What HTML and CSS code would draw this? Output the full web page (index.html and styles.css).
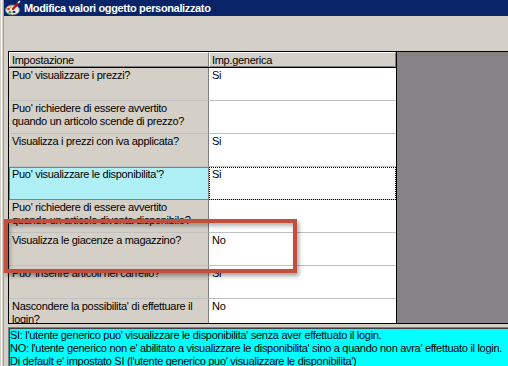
FILE: index.html
```html
<!DOCTYPE html>
<html lang="it">
<head>
    <meta charset="UTF-8">
    <title>Modifica valori oggetto personalizzato</title>
    <link rel="stylesheet" href="styles.css">
</head>
<body>
    <div class="window">
        <!-- Title bar -->
        <div class="titlebar">
            <svg class="app-icon" width="16" height="16" viewBox="0 0 16 16">
                <ellipse cx="7.5" cy="10" rx="7" ry="5" fill="#e8e8e8" stroke="#7a7a7a"/>
                <ellipse cx="9" cy="12" rx="1.6" ry="1.1" fill="#0a246a"/>
                <circle cx="3.5" cy="9" r="1.3" fill="#d22"/>
                <circle cx="5" cy="12.3" r="1.3" fill="#2a2"/>
                <circle cx="6" cy="7" r="1.2" fill="#e8c020"/>
                <path d="M8 9 L14 2" stroke="#c01010" stroke-width="2.2" stroke-linecap="round"/>
                <path d="M13 3 L15 1" stroke="#fff" stroke-width="1.6"/>
            </svg>
            <span class="title">Modifica valori oggetto personalizzato</span>
        </div>

        <div class="client">
            <div class="grid">
                <div class="sheet">
                    <div class="row head">
                        <div class="cell label">Impostazione</div>
                        <div class="cell value">Imp.generica</div>
                    </div>
                    <div class="row">
                        <div class="cell label">Puo' visualizzare i prezzi?</div>
                        <div class="cell value">Si</div>
                    </div>
                    <div class="row">
                        <div class="cell label">Puo' richiedere di essere avvertito<br>quando un articolo scende di prezzo?</div>
                        <div class="cell value"></div>
                    </div>
                    <div class="row">
                        <div class="cell label">Visualizza i prezzi con iva applicata?</div>
                        <div class="cell value">Si</div>
                    </div>
                    <div class="row selected">
                        <div class="cell label">Puo' visualizzare le disponibilita'?</div>
                        <div class="cell value">Si</div>
                    </div>
                    <div class="row">
                        <div class="cell label">Puo' richiedere di essere avvertito<br>quando un articolo diventa disponibile?</div>
                        <div class="cell value"></div>
                    </div>
                    <div class="row">
                        <div class="cell label">Visualizza le giacenze a magazzino?</div>
                        <div class="cell value">No</div>
                    </div>
                    <div class="row">
                        <div class="cell label">Puo' inserire articoli nel carrello?</div>
                        <div class="cell value">Si</div>
                    </div>
                    <div class="row">
                        <div class="cell label">Nascondere la possibilita' di effettuare il<br>login?</div>
                        <div class="cell value">No</div>
                    </div>
                </div>
                <div class="workspace"></div>
            </div>

            <div class="hint">
                <p>SI: l'utente generico puo' visualizzare le disponibilita' senza aver effettuato il login.</p>
                <p>NO: l'utente generico non e' abilitato a visualizzare le disponibilita' sino a quando non avra' effettuato il login.</p>
                <p>Di default e' impostato SI (l'utente generico puo' visualizzare le disponibilita')</p>
            </div>
        </div>

        <!-- annotation drawn over the screenshot -->
        <div class="callout"></div>
    </div>
</body>
</html>
```

FILE: styles.css
```css
*, *::before, *::after {
    margin: 0;
    padding: 0;
    box-sizing: border-box;
}

html, body {
    width: 508px;
    height: 366px;
    overflow: hidden;
}

body {
    font-family: 'Liberation Sans', Arial, sans-serif;
    font-size: 11px;
    line-height: 13px;
    letter-spacing: -0.3px;
    color: #000;
    background: #d4d0c8;
}

.window {
    position: relative;
    height: 366px;
    overflow: hidden;
    padding-left: 4px;
    background: linear-gradient(to right, #d4d0c8 1px, #fff 1px 2px, #d4d0c8 2px 3px, #a0a0a0 3px 4px, #d4d0c8 4px);
}

.titlebar {
    height: 16px;
    display: flex;
    align-items: center;
    gap: 3px;
    padding-left: 1px;
    background: #0a246a;
    color: #fff;
    font-weight: bold;
    font-size: 11px;
    letter-spacing: -0.35px;
}

.app-icon {
    flex: none;
}

.client {
    padding: 35px 0 0 4px;
}

.grid {
    display: flex;
    height: 273px;
    border-top: 1px solid #000;
    border-bottom: 1px solid #000;
    border-left: 1px solid #000;
    overflow: hidden;
}

.sheet {
    width: 388px;
    flex: none;
    background: #fff;
    border-right: 1px solid #000;
    overflow: hidden;
}

.workspace {
    flex: 1;
    background: #858385;
}

.row {
    display: grid;
    grid-template-columns: 200px 187px;
    height: 33px;
}

.cell {
    padding: 1px 3px 0;
    white-space: nowrap;
    overflow: hidden;
}

.label {
    background: #d4d0c8;
    border-right: 1px solid #808080;
    border-bottom: 1px solid #c0c0c0;
}

.value {
    border-bottom: 1px solid #c0c0c0;
}

.row.head {
    height: 16px;
    border-bottom: 1px solid #000;
}

.head .cell {
    background: #d4d0c8;
    border-top: 1px solid #fff;
    border-left: 1px solid #fff;
    border-right: 1px solid #808080;
    border-bottom: 1px solid #808080;
    padding: 1px 2px 0;
}

.selected .label {
    background: #aef0f6;
    border: 1px solid #808080;
    padding: 0 2px;
}

.selected .value {
    outline: 1px dotted #000;
    outline-offset: -1px;
}

.hint {
    margin-top: 3px;
    height: 40px;
    padding: 1px 0 0 1px;
    background: #00ffff;
    border-top: 1px solid #808080;
    border-left: 1px solid #808080;
    box-shadow: inset 1px 1px #404040;
    white-space: nowrap;
    overflow: hidden;
}

.callout {
    position: absolute;
    left: 4px;
    top: 219px;
    width: 293px;
    height: 54px;
    border: 4px solid #c0503c;
    box-shadow: 2px 3px 4px rgba(0,0,0,0.35), inset 2px 3px 4px rgba(0,0,0,0.3);
}
```
